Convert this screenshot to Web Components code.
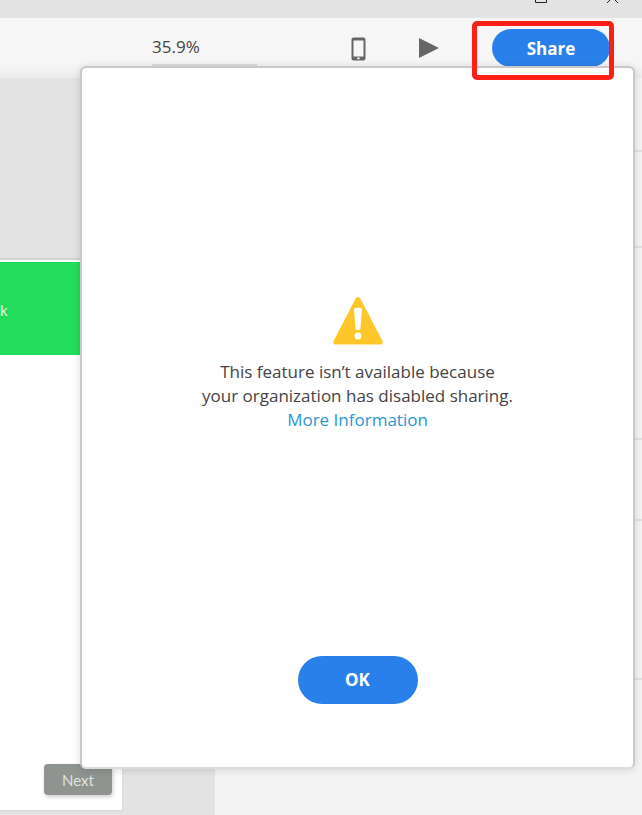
<!DOCTYPE html>
<html lang="en">
<head>
<meta charset="utf-8">
<title>Share</title>
<style>
  html, body { margin: 0; padding: 0; height: 815px; overflow: hidden; background: #f4f4f4; }
  body { font-family: "Open Sans", "Liberation Sans", sans-serif; }
</style>
</head>
<body>
<app-shell>
  <title-bar slot="title"></title-bar>
  <tool-bar slot="tools" zoom="35.9%"></tool-bar>
  <side-panel slot="side">
    <flow-card label="k" action="Next"></flow-card>
  </side-panel>
  <row-list slot="main" rows="74,96,192,81,159"></row-list>
  <alert-dialog slot="overlay" link="More Information" action="OK">
    This feature isn’t available because<br>your organization has disabled sharing.
  </alert-dialog>
  <mark-box slot="overlay"></mark-box>
</app-shell>

<script>
class AppShell extends HTMLElement {
  constructor() {
    super();
    this.attachShadow({ mode: 'open' });
    this.shadowRoot.innerHTML = `
      <style>
        :host {
          display: grid;
          position: relative;
          width: 642px;
          height: 815px;
          overflow: hidden;
          grid-template-columns: 215px 1fr;
          grid-template-rows: 18px 60px 1fr;
        }
        .title, .tools { grid-column: 1 / -1; display: block; }
      </style>
      <div class="title"><slot name="title"></slot></div>
      <div class="tools"><slot name="tools"></slot></div>
      <slot name="side"></slot>
      <slot name="main"></slot>
      <slot name="overlay"></slot>
    `;
  }
}

class TitleBar extends HTMLElement {
  constructor() {
    super();
    this.attachShadow({ mode: 'open' });
    this.shadowRoot.innerHTML = `
      <style>
        :host { display: flex; justify-content: flex-end; height: 18px; background: #e3e3e3; padding-right: 23px; gap: 57px; overflow: hidden; }
        svg { display: block; width: 14px; height: 4px; stroke: #222; fill: none; stroke-width: 1; }
      </style>
      <svg viewBox="0 0 14 4"><path d="M1.5 -2V2.5H12.5V-2"/></svg>
      <svg viewBox="0 0 14 4"><path d="M6 -1L2 3M9 -1L13 3"/></svg>
    `;
  }
}

class ToolBar extends HTMLElement {
  constructor() {
    super();
    this.attachShadow({ mode: 'open' });
    this.shadowRoot.innerHTML = `
      <style>
        :host {
          display: flex;
          align-items: flex-start;
          height: 60px;
          background: linear-gradient(#f6f6f6 0, #f6f6f6 46px, #ececec 60px);
        }
        .zoom {
          width: 105px;
          height: 48px;
          margin: 0 0 0 152px;
          padding-top: 18px;
          box-sizing: border-box;
          font-size: 17px;
          line-height: 22px;
          color: #444;
          border-bottom: 2px solid #dcdcdc;
        }
        svg { display: block; fill: #666; }
        .phone { margin: 19px 0 0 94px; }
        .play { margin: 20px 0 0 53px; }
        pill-button { margin: 11px 0 0 53px; }
      </style>
      <div class="zoom"></div>
      <svg class="phone" width="15" height="24" viewBox="0 0 15 24">
        <path fill-rule="evenodd" d="M2.5 .5h10a2 2 0 0 1 2 2v19a2 2 0 0 1-2 2h-10a2 2 0 0 1-2-2v-19a2 2 0 0 1 2-2zM2.5 3.5v16h10v-16zM6.2 20.6v1.6h2.4v-1.6z"/>
      </svg>
      <svg class="play" width="20" height="20" viewBox="0 0 20 20"><path d="M0 0L20 10L0 20z"/></svg>
      <pill-button width="118" height="38" size="17">Share</pill-button>
    `;
    this.shadowRoot.querySelector('.zoom').textContent = this.getAttribute('zoom');
  }
}

class PillButton extends HTMLElement {
  constructor() {
    super();
    this.attachShadow({ mode: 'open' });
    this.shadowRoot.innerHTML = `
      <style>
        :host {
          display: flex;
          align-items: center;
          justify-content: center;
          width: var(--w);
          height: var(--h);
          border-radius: 999px;
          background: #2a80ea;
          color: #fff;
          font-size: var(--s);
          font-weight: 700;
        }
      </style>
      <slot></slot>
    `;
  }

  connectedCallback() {
    this.style.setProperty('--w', this.getAttribute('width') + 'px');
    this.style.setProperty('--h', this.getAttribute('height') + 'px');
    this.style.setProperty('--s', this.getAttribute('size') + 'px');
  }
}

class SidePanel extends HTMLElement {
  constructor() {
    super();
    this.attachShadow({ mode: 'open' });
    this.shadowRoot.innerHTML = `
      <style>
        :host {
          display: block;
          background: #e3e3e3;
          padding: 180px 0 3px;
          box-sizing: border-box;
          height: 737px;
        }
      </style>
      <slot></slot>
    `;
  }
}

class FlowCard extends HTMLElement {
  constructor() {
    super();
    this.attachShadow({ mode: 'open' });
    this.shadowRoot.innerHTML = `
      <style>
        :host {
          display: flex;
          flex-direction: column;
          width: 123px;
          height: 554px;
          box-sizing: border-box;
          background: #fff;
          border-top: 2px solid #d2d2d2;
          border-right: 1px solid #dcdcdc;
          border-bottom: 2px solid #dcdcdc;
          font-family: Lato, "Open Sans", sans-serif;
        }
        .head {
          height: 93px;
          margin-top: 2px;
          background: #22dd5a;
          color: #eafbef;
          font-size: 15px;
          line-height: 97px;
        }
        .next {
          align-self: flex-end;
          margin: auto 10px 15px 0;
          width: 68px;
          height: 31px;
          border-radius: 4px;
          background: #8f9490;
          box-shadow: 1px 2px 4px rgba(0,0,0,.2);
          color: #dfe1df;
          font-size: 15px;
          line-height: 33px;
          text-align: center;
        }
      </style>
      <div class="head"></div>
      <div class="next"></div>
    `;
    this.shadowRoot.querySelector('.head').textContent = this.getAttribute('label');
    this.shadowRoot.querySelector('.next').textContent = this.getAttribute('action');
  }
}

class RowList extends HTMLElement {
  constructor() {
    super();
    this.attachShadow({ mode: 'open' });
    this.shadowRoot.innerHTML = `
      <style>
        :host { display: block; background: #f4f4f4; }
        div { box-sizing: border-box; border-bottom: 2px solid #e2e2e2; }
      </style>
    `;
  }

  connectedCallback() {
    for (const h of this.getAttribute('rows').split(',')) {
      const row = document.createElement('div');
      row.style.height = h + 'px';
      this.shadowRoot.appendChild(row);
    }
  }
}

class AlertDialog extends HTMLElement {
  constructor() {
    super();
    this.attachShadow({ mode: 'open' });
    this.shadowRoot.innerHTML = `
      <style>
        :host {
          position: absolute;
          left: 80px;
          top: 66px;
          width: 555px;
          height: 703px;
          box-sizing: border-box;
          display: flex;
          flex-direction: column;
          align-items: center;
          background: #fff;
          border: 2px solid #c9c9c9;
          border-bottom-color: #dcdcdc;
          border-radius: 6px;
          box-shadow: 0 1px 8px rgba(0,0,0,.14);
          padding: 229px 0 63px;
          color: #444;
          font-size: 17px;
          line-height: 24px;
          text-align: center;
        }
        svg { display: block; margin-bottom: 15px; }
        a { display: block; color: #2a96d4; text-decoration: none; }
        pill-button { margin-top: auto; }
      </style>
      <svg width="50" height="48" viewBox="0 0 50 48">
        <path fill="#ffc629" d="M22.6 1.6a2.8 2.8 0 0 1 4.8 0l22 42.4a2.4 2.4 0 0 1-2.2 3.6h-44.4a2.4 2.4 0 0 1-2.2-3.6z"/>
        <path fill="#fff" d="M21 13.2a2.2 2.2 0 0 1 2.2-2.4h3.6a2.2 2.2 0 0 1 2.2 2.4l-1.6 18.6a1.4 1.4 0 0 1-1.4 1.2h-2a1.4 1.4 0 0 1-1.4-1.2z"/>
        <circle fill="#fff" cx="25" cy="39" r="3.4"/>
      </svg>
      <div><slot></slot></div>
      <a href="#"></a>
      <pill-button width="120" height="48" size="17"></pill-button>
    `;
    this.shadowRoot.querySelector('a').textContent = this.getAttribute('link');
    this.shadowRoot.querySelector('pill-button').textContent = this.getAttribute('action');
  }
}

// the red annotation drawn over the screenshot
class MarkBox extends HTMLElement {
  constructor() {
    super();
    this.attachShadow({ mode: 'open' });
    this.shadowRoot.innerHTML = `
      <style>
        :host {
          position: absolute;
          left: 472px;
          top: 21px;
          width: 142px;
          height: 59px;
          box-sizing: border-box;
          border: 5px solid #fb1f17;
          border-radius: 5px;
        }
      </style>
    `;
  }
}

customElements.define('app-shell', AppShell);
customElements.define('title-bar', TitleBar);
customElements.define('pill-button', PillButton);
customElements.define('tool-bar', ToolBar);
customElements.define('side-panel', SidePanel);
customElements.define('flow-card', FlowCard);
customElements.define('row-list', RowList);
customElements.define('alert-dialog', AlertDialog);
customElements.define('mark-box', MarkBox);
</script>
</body>
</html>
